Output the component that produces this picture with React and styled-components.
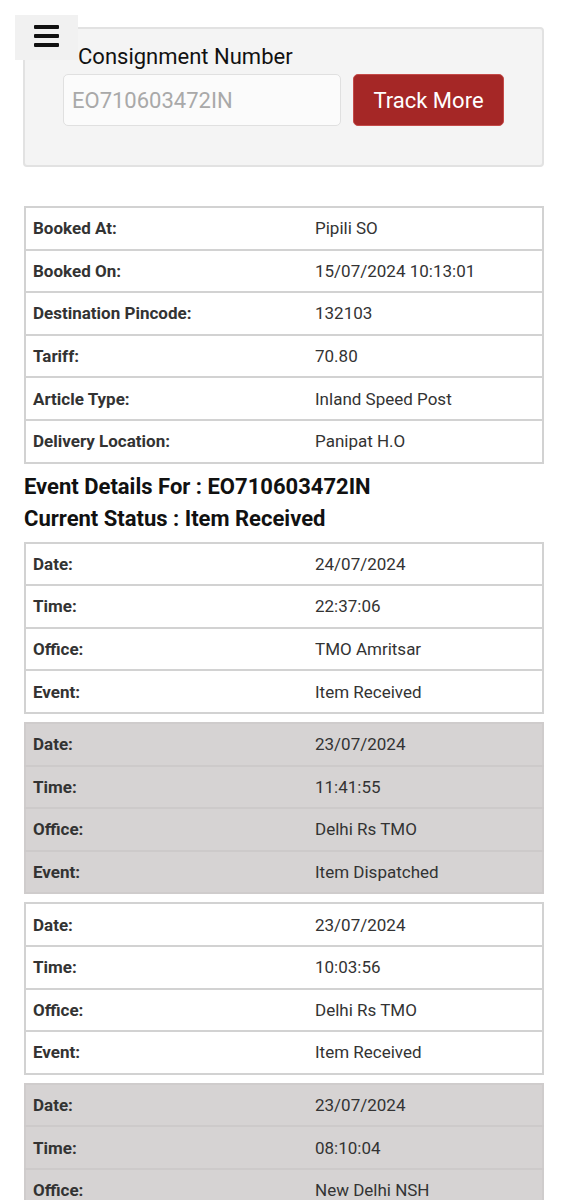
import React from 'react';
import styled, { createGlobalStyle } from 'styled-components';

const GlobalStyle = createGlobalStyle`
  body {
    margin: 0;
    background: #ffffff;
    font-family: Roboto, "Liberation Sans", sans-serif;
    color: #222;
  }
`;

const booking = [
  ['Booked At:', 'Pipili SO'],
  ['Booked On:', '15/07/2024 10:13:01'],
  ['Destination Pincode:', '132103'],
  ['Tariff:', '70.80'],
  ['Article Type:', 'Inland Speed Post'],
  ['Delivery Location:', 'Panipat H.O'],
];

const events = [
  { date: '24/07/2024', time: '22:37:06', office: 'TMO Amritsar', event: 'Item Received' },
  { date: '23/07/2024', time: '11:41:55', office: 'Delhi Rs TMO', event: 'Item Dispatched' },
  { date: '23/07/2024', time: '10:03:56', office: 'Delhi Rs TMO', event: 'Item Received' },
  { date: '23/07/2024', time: '08:10:04', office: 'New Delhi NSH', event: 'Item Bagged' },
];

const App = () => {
  return (
    <Page>
      <GlobalStyle />
      <MenuButton aria-label="menu">
        <Bar />
        <Bar />
        <Bar />
      </MenuButton>
      <SearchPanel>
        <Label>
          <Star>*</Star>Consignment Number
        </Label>
        <SearchRow>
          <Input placeholder="EO710603472IN" />
          <TrackButton>Track More</TrackButton>
        </SearchRow>
      </SearchPanel>

      <Table>
        <tbody>
          {booking.map(([k, v]) => (
            <Row key={k}>
              <Key>{k}</Key>
              <Value>{v}</Value>
            </Row>
          ))}
        </tbody>
      </Table>

      <Headings>
        <Heading>Event Details For : EO710603472IN</Heading>
        <Heading>Current Status : Item Received</Heading>
      </Headings>

      <EventList>
        {events.map((e, i) => (
          <Table key={i} $shaded={i % 2 === 1}>
            <tbody>
              <Row $shaded={i % 2 === 1}>
                <Key>Date:</Key>
                <Value>{e.date}</Value>
              </Row>
              <Row $shaded={i % 2 === 1}>
                <Key>Time:</Key>
                <Value>{e.time}</Value>
              </Row>
              <Row $shaded={i % 2 === 1}>
                <Key>Office:</Key>
                <Value>{e.office}</Value>
              </Row>
              <Row $shaded={i % 2 === 1}>
                <Key>Event:</Key>
                <Value>{e.event}</Value>
              </Row>
            </tbody>
          </Table>
        ))}
      </EventList>
    </Page>
  );
};

export default App;

const Page = styled.div`
  position: relative;
  padding: 27px 23px 20px 23px;
`;

const MenuButton = styled.div`
  position: absolute;
  left: 15px;
  top: 15px;
  width: 63px;
  height: 45px;
  background: #f1f1f1;
  display: flex;
  flex-direction: column;
  align-items: center;
  padding-top: 10px;
  box-sizing: border-box;
  gap: 5px;
  z-index: 2;
`;

const Bar = styled.span`
  display: block;
  width: 25px;
  height: 4px;
  background: #111;
  border-radius: 1px;
`;

const SearchPanel = styled.div`
  background: #f4f4f4;
  border: 2px solid #e2e2e2;
  border-radius: 4px;
  padding: 16px 0 39px 38px;
  margin-bottom: 39px;
`;

const Label = styled.div`
  font-size: 22px;
  color: #111;
  margin-bottom: 5px;
  line-height: 24px;
`;

const Star = styled.span`
  color: #d8d8d8;
  font-size: 14px;
  margin-right: 9px;
  vertical-align: top;
`;

const SearchRow = styled.div`
  display: flex;
  gap: 12px;
`;

const Input = styled.input`
  width: 278px;
  height: 52px;
  box-sizing: border-box;
  border: 1.5px solid #e0e0e0;
  border-radius: 5px;
  background: #fbfbfb;
  padding: 0 8px;
  font-family: Roboto, "Liberation Sans", sans-serif;
  font-size: 22px;
  &::placeholder {
    color: #a9a9a9;
  }
`;

const TrackButton = styled.button`
  width: 151px;
  height: 52px;
  background: #a52726;
  border: 1.5px solid #c44a48;
  border-radius: 5px;
  color: #fff;
  font-family: Roboto, "Liberation Sans", sans-serif;
  font-size: 22px;
  padding: 0;
`;

const Table = styled.table`
  width: 520px;
  margin-left: 1px;
  border-collapse: collapse;
  border: 2px solid ${(p) => (p.$shaded ? '#cfcccc' : '#d2d2d2')};
  background: ${(p) => (p.$shaded ? '#d6d3d3' : '#ffffff')};
`;

const Row = styled.tr`
  height: 42.6px;
  & + & td {
    border-top: 2px solid ${(p) => (p.$shaded ? '#cdcaca' : '#d2d2d2')};
  }
`;

const Key = styled.td`
  width: 282px;
  padding: 0 0 0 7px;
  font-size: 17px;
  font-weight: 700;
  color: #333;
`;

const Value = styled.td`
  padding: 0;
  font-size: 17px;
  color: #333;
`;

const Headings = styled.div`
  margin: 7px 0 7px 1px;
`;

const Heading = styled.div`
  font-size: 22px;
  font-weight: 700;
  color: #111;
  line-height: 32px;
`;

const EventList = styled.div`
  display: flex;
  flex-direction: column;
  gap: 8px;
`;
